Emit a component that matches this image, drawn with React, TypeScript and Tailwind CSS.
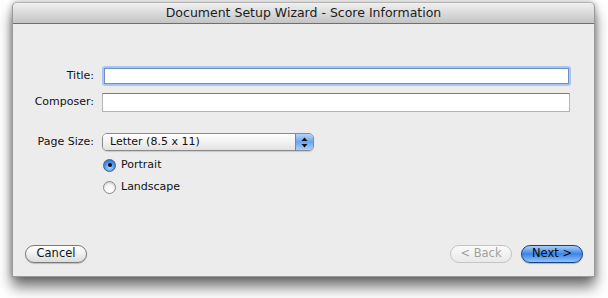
import React from "react";

const font = { fontFamily: '"DejaVu Sans", "Noto Sans", sans-serif' };

export default function App() {
  return (
    <div className="w-[608px] h-[298px] bg-white pt-[2px] pl-[12px]" style={font}>
      <div className="w-[583px] h-[275px] flex flex-col rounded-t-[5px] shadow-[0_10px_14px_rgba(0,0,0,0.55),0_0_6px_rgba(0,0,0,0.3)] bg-[#ececec] border border-[#9a9a9a] border-t-[#b5b5b5]">
        <div className="h-[21px] shrink-0 flex items-center justify-center rounded-t-[5px] bg-gradient-to-b from-[#f0f0f0] via-[#dadada] to-[#c4c4c4] border-b border-[#6f6f6f] text-[12.5px] text-[#1c1c1c]">
          Document Setup Wizard - Score Information
        </div>
        <div className="flex-1 flex flex-col text-[11px] text-[#111]">
          <div className="flex items-center mt-[42px] h-[20px]">
            <div className="w-[82px] text-right pr-[1px]">Title:</div>
            <div className="ml-[7px] w-[469px] h-[20px] rounded-[3px] bg-[#a9c6ee] p-[2px]">
              <div className="w-full h-full bg-white border border-[#6e8fc6]" />
            </div>
          </div>
          <div className="flex items-center mt-[7px] h-[19px]">
            <div className="w-[82px] text-right pr-[1px]">Composer:</div>
            <div className="ml-[7px] w-[468px] h-[19px] bg-white border border-[#b4b4b4] border-t-[#7c7c7c]" />
          </div>
          <div className="flex items-center mt-[21px] h-[18px]">
            <div className="w-[82px] text-right pr-[1px]">Page Size:</div>
            <div className="ml-[7px] w-[212px] h-[18px] flex rounded-[5px] border border-[#8a8a8a] overflow-hidden shadow-[0_1px_1px_rgba(0,0,0,0.15)]">
              <div className="flex-1 flex items-center pl-[7px] bg-gradient-to-b from-white via-[#f2f2f2] to-[#e2e2e2]">
                Letter (8.5 x 11)
              </div>
              <div className="w-[18px] flex items-center justify-center bg-gradient-to-b from-[#b7d4f8] via-[#6aa4ee] to-[#a7d0fb] border-l border-[#6b86b8]">
                <svg width="7" height="11" viewBox="0 0 7 11">
                  <path d="M3.5 0.5 L6.5 4 L0.5 4 Z" fill="#111" />
                  <path d="M3.5 10.5 L6.5 7 L0.5 7 Z" fill="#111" />
                </svg>
              </div>
            </div>
          </div>
          <div className="flex items-center mt-[7px] ml-[90px] h-[14px]">
            <div className="w-[13px] h-[13px] rounded-full border border-[#3a5f9c] bg-[radial-gradient(circle_at_50%_70%,#a8d4ff_0%,#4e90e8_55%,#2d62c0_100%)] flex items-center justify-center">
              <div className="w-[4px] h-[4px] rounded-full bg-[#111]" />
            </div>
            <span className="ml-[5px] leading-[14px]">Portrait</span>
          </div>
          <div className="flex items-center mt-[8px] ml-[90px] h-[14px]">
            <div className="w-[13px] h-[13px] rounded-full border border-[#8a8a8a] bg-gradient-to-b from-[#f4f4f4] to-white shadow-[inset_0_1px_2px_rgba(0,0,0,0.2)]" />
            <span className="ml-[5px] leading-[14px]">Landscape</span>
          </div>
          <div className="flex items-center mt-[51px] pl-[12px] pr-[11px]">
            <div className="w-[62px] h-[18px] rounded-full border border-[#7a7a7a] bg-gradient-to-b from-white via-[#f0f0f0] to-[#dcdcdc] flex items-center justify-center text-[11.5px] text-[#111] shadow-[0_1px_1px_rgba(0,0,0,0.2)]">
              Cancel
            </div>
            <div className="flex-1" />
            <div className="w-[62px] h-[18px] rounded-full border border-[#c4c4c4] bg-gradient-to-b from-[#fafafa] to-[#e9e9e9] flex items-center justify-center text-[11.5px] text-[#a0a0a0]">
              &lt; Back
            </div>
            <div className="ml-[9px] w-[62px] h-[18px] rounded-full border border-[#1f3f83] bg-gradient-to-b from-[#a9cff9] via-[#3c84e6] to-[#8ec5fb] flex items-center justify-center text-[11.5px] text-[#0a0a0a] shadow-[0_1px_1px_rgba(0,0,0,0.25)]">
              Next &gt;
            </div>
          </div>
        </div>
      </div>
    </div>
  );
}
